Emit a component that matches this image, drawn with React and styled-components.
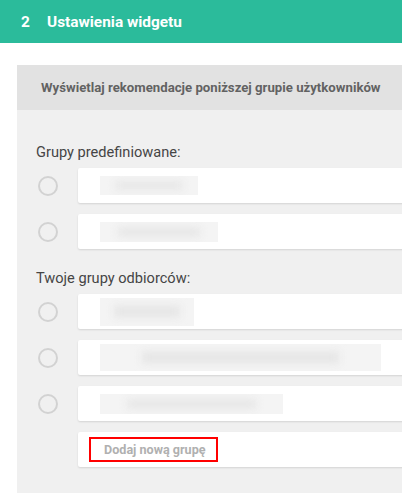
import styled, { createGlobalStyle } from "styled-components";

const Global = createGlobalStyle`
  body {
    margin: 0;
    background: #fff;
    font-family: Roboto, "Open Sans", sans-serif;
    overflow: hidden;
  }
`

const predefined = [
  { w: 98, h: 19 },
  { w: 118, h: 20 },
]

const ownGroups = [
  { w: 94, h: 28 },
  { w: 281, h: 27 },
  { w: 183, h: 20 },
]

function GroupRow({ w, h }) {
  return (
    <Row>
      <Radio />
      <Card>
        <Blurred $w={w} $h={h}>
          <Streak />
        </Blurred>
      </Card>
    </Row>
  )
}

export default function App() {
  return (
    <Page>
      <Global />
      <StepBar>
        <StepNo>2</StepNo>
        <StepTitle>Ustawienia widgetu</StepTitle>
      </StepBar>
      <Panel>
        <PanelHead>Wyświetlaj rekomendacje poniższej grupie użytkowników</PanelHead>
        <PanelBody>
          <Label>Grupy predefiniowane:</Label>
          <List>
            {predefined.map((g, i) => <GroupRow key={i} {...g} />)}
          </List>
          <Label $spaced>Twoje grupy odbiorców:</Label>
          <List>
            {ownGroups.map((g, i) => <GroupRow key={i} {...g} />)}
            <Row>
              <Spacer />
              <Card>
                <AddButton>Dodaj nową grupę</AddButton>
              </Card>
            </Row>
          </List>
        </PanelBody>
      </Panel>
    </Page>
  )
}

const Page = styled.div`
  width: 402px;
  height: 494px;
  overflow: hidden;
`

const StepBar = styled.div`
  display: flex;
  align-items: center;
  height: 43px;
  padding-left: 21px;
  background: #2bbb9b;
  color: #fff;
  font-weight: 700;
  font-size: 15.4px;
`

const StepNo = styled.span`
  width: 26px;
`

const StepTitle = styled.span``

const Panel = styled.div`
  margin: 22px 0 0 17px;
  width: 400px;
`

const PanelHead = styled.div`
  height: 45px;
  display: flex;
  align-items: center;
  padding-left: 24px;
  background: #e2e2e2;
  color: #626262;
  font-weight: 700;
  font-size: 13.2px;
  white-space: nowrap;
`

const PanelBody = styled.div`
  background: #f0f0f0;
  padding: 32px 0 26px 19px;
`

const Label = styled.div`
  font-size: 14.6px;
  line-height: 20px;
  color: #454545;
  margin-top: ${p => p.$spaced ? "19px" : "0"};
  margin-bottom: 6px;
`

const List = styled.div`
  display: flex;
  flex-direction: column;
  gap: 11px;
`

const Row = styled.div`
  display: flex;
  align-items: center;
`

const Radio = styled.span`
  box-sizing: border-box;
  width: 20px;
  height: 20px;
  margin: 0 20px 0 2px;
  border-radius: 50%;
  border: 2px solid #d2d2d2;
  flex-shrink: 0;
`

const Spacer = styled.span`
  width: 42px;
  flex-shrink: 0;
`

const Card = styled.div`
  flex: 1;
  height: 35px;
  display: flex;
  align-items: center;
  padding-left: 22px;
  background: #fff;
  border-radius: 2px;
  box-shadow: 0 1px 2px rgba(0, 0, 0, 0.12);
`

const Blurred = styled.div`
  width: ${p => p.$w}px;
  height: ${p => p.$h}px;
  background: #f4f4f4;
  display: flex;
  align-items: center;
  justify-content: center;
  overflow: hidden;
`

const Streak = styled.div`
  width: 70%;
  height: 40%;
  background: #e4e4e4;
  filter: blur(4px);
`

const AddButton = styled.div`
  box-sizing: border-box;
  width: 129px;
  height: 25px;
  margin-left: -11px;
  padding-left: 13px;
  display: flex;
  align-items: center;
  border: 2px solid #ff0000;
  color: #b0b0b0;
  font-weight: 700;
  font-size: 12.6px;
`
